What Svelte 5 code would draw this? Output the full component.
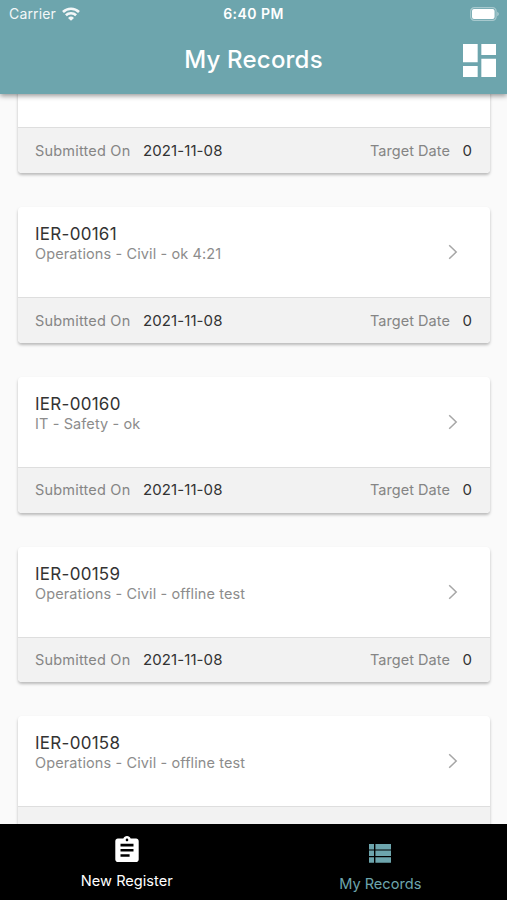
<script>
  let activeTab = $state("records");

  const records = [
    { id: "", summary: "", submitted: "2021-11-08", target: 0 },
    { id: "IER-00161", summary: "Operations - Civil - ok 4:21", submitted: "2021-11-08", target: 0 },
    { id: "IER-00160", summary: "IT - Safety - ok", submitted: "2021-11-08", target: 0 },
    { id: "IER-00159", summary: "Operations - Civil - offline test", submitted: "2021-11-08", target: 0 },
    { id: "IER-00158", summary: "Operations - Civil - offline test" },
  ];
</script>

<div class="screen">
  <header>
    <div class="status-bar">
      <span class="carrier">
        Carrier
        <svg class="wifi" viewBox="0 0 18 14" aria-hidden="true">
          <path d="M1 5a11.4 11.4 0 0 1 16 0" />
          <path d="M3.9 8.3a7.3 7.3 0 0 1 10.2 0" />
          <path class="dot" d="M9 13.8 6 10.9a4.3 4.3 0 0 1 6 0z" />
        </svg>
      </span>
      <span class="time">6:40 PM</span>
      <svg class="battery" viewBox="0 0 30 14" aria-hidden="true">
        <rect class="shell" x="0.7" y="0.7" width="25.4" height="12.6" rx="3.6" />
        <rect x="2" y="2" width="22.6" height="10" rx="2" />
        <path class="cap" d="M27.2 4.8c2.2.8 2.2 3.6 0 4.4z" />
      </svg>
    </div>
    <div class="app-bar">
      <h1>My Records</h1>
      <button class="dashboard" aria-label="Dashboard">
        <svg viewBox="3 3 18 18">
          <path d="M3 13h8V3H3v10zm0 8h8v-6H3v6zm10 0h8V11h-8v10zm0-18v6h8V3h-8z" />
        </svg>
      </button>
    </div>
  </header>

  <main>
    <div class="list">
      {#each records as record (record.id)}
        <article class="card">
          <div class="card-body">
            {#if record.id}
              <div>
                <h2>{record.id}</h2>
                <p>{record.summary}</p>
              </div>
              <svg class="chevron" viewBox="0 0 10 16" aria-hidden="true">
                <path d="M1.2 1.2 8.2 8l-7 6.8" />
              </svg>
            {/if}
          </div>
          <div class="card-footer">
            {#if record.submitted}
              <span class="label submitted">Submitted On</span>
              <span class="value">{record.submitted}</span>
              <span class="label target">Target Date</span>
              <span class="value">{record.target}</span>
            {/if}
          </div>
        </article>
      {/each}
    </div>
  </main>

  <nav>
    <button class="tab" class:active={activeTab === "register"} onclick={() => (activeTab = "register")}>
      <svg class="clipboard" viewBox="3 1 18 20" aria-hidden="true">
        <path
          d="M19 3h-4.18C14.4 1.84 13.3 1 12 1c-1.3 0-2.4.84-2.82 2H5c-1.1 0-2 .9-2 2v14c0 1.1.9 2 2 2h14c1.1 0 2-.9 2-2V5c0-1.1-.9-2-2-2zm-7 0c.55 0 1 .45 1 1s-.45 1-1 1-1-.45-1-1 .45-1 1-1zm2 14H7v-2h7v2zm3-4H7v-2h10v2zm0-4H7V7h10v2z"
        />
      </svg>
      <span>New Register</span>
    </button>
    <button class="tab records" class:active={activeTab === "records"} onclick={() => (activeTab = "records")}>
      <svg class="rows" viewBox="0 0 22 19" aria-hidden="true">
        <path d="M0 0h5v5.5H0zM6.4 0H22v5.5H6.4zM0 6.6h5v5.5H0zM6.4 6.6H22v5.5H6.4zM0 13.2h5v5.5H0zM6.4 13.2H22v5.5H6.4z" />
      </svg>
      <span>My Records</span>
    </button>
  </nav>
</div>

<style>
  :global(body) {
    margin: 0;
  }

  .screen {
    display: flex;
    flex-direction: column;
    height: 900px;
    overflow: hidden;
    background: #fafafa;
    font-family: Inter, "Liberation Sans", sans-serif;
  }

  button {
    padding: 0;
    border: 0;
    background: none;
    font: inherit;
    cursor: pointer;
  }

  h1,
  h2,
  p {
    margin: 0;
    font-weight: 400;
  }

  header {
    position: relative;
    z-index: 1;
    flex: none;
    height: 94px;
    background: #6da5ad;
    color: #fff;
    box-shadow: 0 2px 5px rgba(0, 0, 0, 0.4);
  }

  .status-bar,
  .app-bar {
    display: grid;
    grid-template-columns: 1fr auto 1fr;
    align-items: center;
  }

  .status-bar {
    height: 27px;
    padding: 0 7px;
    font-size: 14px;
  }

  .carrier {
    display: flex;
    align-items: center;
    gap: 6px;
    padding-left: 2px;
    letter-spacing: 0.15px;
    opacity: 0.92;
  }

  .wifi {
    width: 18px;
    height: 14px;
    fill: none;
    stroke: #fff;
    stroke-width: 2.6;
  }

  .wifi .dot {
    fill: #fff;
    stroke: none;
  }

  .time {
    font-weight: 600;
    letter-spacing: 0.45px;
  }

  .battery {
    justify-self: end;
    width: 30px;
    height: 14px;
    fill: #fff;
  }

  .battery .shell {
    fill: none;
    stroke: #fff;
    stroke-width: 1.2;
    opacity: 0.4;
  }

  .battery .cap {
    opacity: 0.4;
  }

  .app-bar {
    height: 66px;
    padding: 0 11px;
  }

  h1 {
    grid-column: 2;
    font-size: 24px;
    font-weight: 500;
    letter-spacing: 0.2px;
    line-height: 30px;
  }

  .dashboard {
    justify-self: end;
    width: 33px;
    height: 33px;
  }

  .dashboard svg {
    display: block;
    fill: #fff;
  }

  main {
    flex: 1;
    min-height: 0;
    overflow: hidden;
  }

  .list {
    display: flex;
    flex-direction: column;
    gap: 34px;
    margin-top: -56.6px;
    padding: 0 17px 0 18px;
  }

  .card {
    flex: none;
    border-radius: 4px;
    overflow: hidden;
    background: #fff;
    box-shadow: 0 2px 3px rgba(0, 0, 0, 0.26);
  }

  .card-body {
    display: flex;
    justify-content: space-between;
    box-sizing: border-box;
    height: 90px;
    padding: 17px 32px 0 17px;
  }

  h2 {
    color: #333;
    font-size: 17px;
    letter-spacing: 0.28px;
    line-height: 20px;
  }

  p {
    color: #8c8c8c;
    font-size: 14.5px;
    letter-spacing: 0.11px;
    line-height: 19px;
  }

  .chevron {
    width: 10px;
    height: 16px;
    margin-top: 20px;
    fill: none;
    stroke: #a6a6a6;
    stroke-width: 1.5;
  }

  .card-footer {
    display: flex;
    align-items: center;
    box-sizing: border-box;
    height: 45.75px;
    padding: 0 18px 1px 17px;
    border-top: 1px solid #dedede;
    background: #f2f2f2;
    font-size: 15px;
  }

  .label {
    color: #858585;
    font-size: 14.5px;
  }

  .submitted {
    letter-spacing: 0.2px;
  }

  .value {
    margin-left: 12.5px;
    color: #333;
    letter-spacing: 0.1px;
  }

  .target {
    margin-left: auto;
    letter-spacing: 0.05px;
  }

  nav {
    display: flex;
    flex: none;
    height: 76px;
    background: #000;
  }

  .tab {
    display: flex;
    flex: 1;
    flex-direction: column;
    align-items: center;
    padding-top: 12px;
    color: #fff;
    font-size: 14.6px;
    line-height: 20px;
  }

  .tab.active {
    color: #6da5ad;
  }

  .tab svg {
    fill: currentColor;
  }

  .clipboard {
    width: 24px;
    height: 26px;
    margin-bottom: 9px;
  }

  .records {
    padding-top: 19.5px;
  }

  .rows {
    width: 22px;
    height: 19px;
    margin-bottom: 11.5px;
  }

  .rows + span {
    font-size: 14.6px;
  }
</style>
